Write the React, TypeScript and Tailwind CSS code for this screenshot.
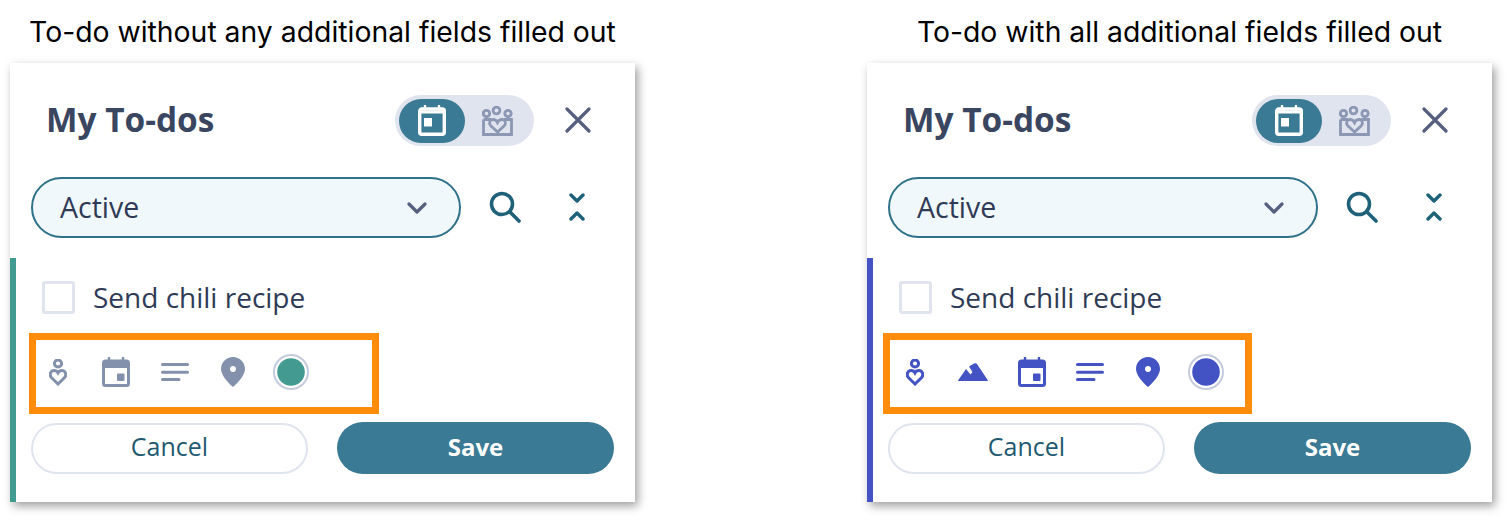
import React from "react";

const CalendarIcon = ({ className = "" }: { className?: string }) => (
  <svg viewBox="0 0 28 30" className={className} fill="none" stroke="currentColor">
    <rect x="1.5" y="4" width="25" height="24.5" rx="2" strokeWidth="3" />
    <path d="M1.5 8H26.5" strokeWidth="6" />
    <path d="M7 1V5M21 1V5" strokeWidth="2.5" strokeLinecap="round" />
    <rect x="15" y="16.5" width="7.5" height="7.5" rx="1" fill="currentColor" stroke="none" />
  </svg>
);

const ToggleCalendar = () => (
  <svg viewBox="0 0 28 31" className="w-7 h-[31px] text-white" fill="none" stroke="currentColor">
    <rect x="1.7" y="4" width="24.6" height="25.3" rx="2" strokeWidth="3.4" />
    <path d="M1.7 7H26.3" strokeWidth="3" />
    <path d="M7 1V5M21 1V5" strokeWidth="2.5" strokeLinecap="round" />
    <rect x="6" y="13" width="8" height="8.5" fill="currentColor" stroke="none" />
  </svg>
);

const FamilyIcon = () => (
  <svg viewBox="0 0 31 30" className="w-[31px] h-[30px] text-[#8b97b3]" fill="none" stroke="currentColor" strokeWidth="2.8">
    <circle cx="4.5" cy="7.5" r="3.2" />
    <circle cx="14.5" cy="4.5" r="3.4" />
    <circle cx="26" cy="7.5" r="3.2" />
    <path d="M1.5 13.5H9M22 13.5H29.5V28.5H1.5V13.5" />
    <path d="M15.5 26L8.5 19.5C6.5 17 8 13.5 11 13.5C13 13.5 14.5 14.5 15.5 16.5C16.5 14.5 18 13.5 20 13.5C23 13.5 24.5 17 22.5 19.5L15.5 26Z" />
  </svg>
);

const PersonHeart = () => (
  <svg viewBox="0 0 18 27" className="w-[18px] h-[27px]" fill="none" stroke="currentColor" strokeWidth="3">
    <circle cx="9" cy="4.5" r="3.6" />
    <path d="M9 25L2.4 18.5C-0.2 15.5 2 11.5 5.2 11.5C6.8 11.5 8.2 12.3 9 13.8C9.8 12.3 11.2 11.5 12.8 11.5C16 11.5 18.2 15.5 15.6 18.5L9 25Z" />
  </svg>
);

const Lines = () => (
  <svg viewBox="0 0 28 18" className="w-7 h-[18px]" fill="none" stroke="currentColor" strokeWidth="3" strokeLinecap="round">
    <path d="M1.5 1.5H26.5M1.5 9.2H26.5M1.5 16.5H18" />
  </svg>
);

const Pin = () => (
  <svg viewBox="0 0 24 30" className="w-6 h-[30px]" fill="currentColor">
    <path fillRule="evenodd" d="M12 0C5.4 0 0 5.2 0 11.8C0 18 6.5 25.5 12 30C17.5 25.5 24 18 24 11.8C24 5.2 18.6 0 12 0ZM12 9C13.7 9 15 10.3 15 12C15 13.7 13.7 15 12 15C10.3 15 9 13.7 9 12C9 10.3 10.3 9 12 9Z" />
  </svg>
);

const Mountain = () => (
  <svg viewBox="0 0 30 18" className="w-[30px] h-[18px]" fill="currentColor">
    <path d="M0 17.5L8 6L12.5 11.5L14.5 9L11 3.5L16 0.5C17 0 18 0 19 1L30 17.5C30 17.8 29.8 18 29.5 18H0.5C0.2 18 0 17.8 0 17.5Z" />
  </svg>
);

const Circle = ({ fill }: { fill: string }) => (
  <svg viewBox="0 0 36 36" className="w-9 h-9 shrink-0">
    <circle cx="18" cy="18" r="17" fill="white" stroke="#c5cbdc" strokeWidth="2" />
    <circle cx="18" cy="18" r="13.8" fill={fill} />
  </svg>
);

type CardProps = {
  bar: string;
  iconColor: string;
  dot: string;
  boxClass: string;
  mountain?: boolean;
};

const Card = ({ bar, iconColor, dot, boxClass, mountain }: CardProps) => {
  const slot = "w-[34px] h-9 flex items-center justify-center";
  return (
    <div className="w-[625px] h-[439px] bg-white shadow-[3px_4px_9px_rgba(0,0,0,0.38)] flex flex-col">
      <div className="h-[114px] pl-[36px] pr-[44px] pt-[32px] flex items-start justify-between">
        <span className="text-[33.4px] leading-[48px] font-bold text-[#3a4660]">My To-dos</span>
        <div className="flex items-start">
          <div className="w-[139px] h-[51px] rounded-full bg-[#e0e4ee] p-[3px] pl-[4px] flex items-center">
            <div className="w-[66px] h-[44px] rounded-full bg-[#3b7a94] flex items-center justify-center">
              <ToggleCalendar />
            </div>
            <div className="ml-[17px]">
              <FamilyIcon />
            </div>
          </div>
          <button className="ml-[31px] mt-[12px] text-[#56607e]">
            <svg viewBox="0 0 26 26" className="w-[26px] h-[26px]" fill="none" stroke="currentColor" strokeWidth="3.2" strokeLinecap="round">
              <path d="M2 2L24 24M24 2L2 24" />
            </svg>
          </button>
        </div>
      </div>
      <div className="h-[81px] pl-[21px] flex items-start">
        <div className="w-[430px] h-[61px] rounded-full bg-[#f0f8fb] border-2 border-[#2f7189] pl-[27px] pr-[32px] flex items-center justify-between">
          <span className="text-[28.5px] leading-[36px] pb-[2px] text-[#2f3b56]">Active</span>
          <svg viewBox="0 0 20 12" className="w-5 h-3 text-[#56607e]" fill="none" stroke="currentColor" strokeWidth="3.2" strokeLinecap="round" strokeLinejoin="round">
            <path d="M2 2L10 10L18 2" />
          </svg>
        </div>
        <svg viewBox="0 0 32 32" className="w-8 h-8 ml-[28px] mt-[14px] text-[#1f6178]" fill="none" stroke="currentColor" strokeLinecap="round">
          <circle cx="13" cy="13" r="10.5" strokeWidth="3.6" />
          <path d="M21 21L30 30" strokeWidth="3.6" />
        </svg>
        <svg viewBox="0 0 16 28" className="w-4 h-7 ml-[48px] mt-[16px] text-[#1f6178]" fill="none" stroke="currentColor" strokeWidth="3.4" strokeLinecap="round" strokeLinejoin="round">
          <path d="M2 2L8 8L14 2M2 26L8 20L14 26" />
        </svg>
      </div>
      <div className={`flex-1 border-l-[6px] ${bar} pt-[23px]`}>
        <div className="flex items-center pl-[26px] h-[32px]">
          <div className="w-[33px] h-[33px] rounded-[3px] border-[3px] border-[#e0e4ee]" />
          <span className="ml-[18px] text-[28px] text-[#2f3b56]">Send chili recipe</span>
        </div>
        <div className={`mt-[20px] h-[81px] border-[7px] border-[#ff8c0a] pb-[3px] flex items-center gap-[24.3px] ${boxClass} ${iconColor}`}>
          <div className={slot}><PersonHeart /></div>
          {mountain && <div className={slot}><Mountain /></div>}
          <div className={slot}><CalendarIcon className="w-7 h-[30px]" /></div>
          <div className={slot}><Lines /></div>
          <div className={slot}><Pin /></div>
          <div className={slot}><Circle fill={dot} /></div>
        </div>
        <div className="mt-[8px] ml-[15px] flex items-center gap-[29px]">
          <button className="w-[277px] h-[51px] rounded-full border-2 border-[#e0e4ee] bg-white pb-[2px] text-[25px] text-[#1f5a70]">Cancel</button>
          <button className="w-[277px] h-[52px] rounded-full bg-[#3b7a94] pb-[2px] text-[24px] font-bold text-white">Save</button>
        </div>
      </div>
    </div>
  );
};

const App = () => {
  return (
    <div className="w-[1510px] h-[520px] bg-white pl-[10px] flex gap-[232px] overflow-hidden font-['Open_Sans',sans-serif]">
      <div className="w-[625px]">
        <p className="h-[63px] pt-[14px] text-center text-[28.35px] leading-[36px] whitespace-nowrap text-black font-['Inter',sans-serif]">
          To-do without any additional fields filled out
        </p>
        <Card bar="border-[#429a90]" iconColor="text-[#8491ad]" dot="#429a90" boxClass="ml-[13px] w-[350px] pl-[5px]" />
      </div>
      <div className="w-[625px]">
        <p className="h-[63px] pt-[14px] text-center text-[28.35px] leading-[36px] whitespace-nowrap text-black font-['Inter',sans-serif]">
          To-do with all additional fields filled out
        </p>
        <Card bar="border-[#4353c4]" iconColor="text-[#4353c4]" dot="#4353c4" boxClass="ml-[10px] w-[369px] pl-[8px]" mountain />
      </div>
    </div>
  );
};

export default App;
